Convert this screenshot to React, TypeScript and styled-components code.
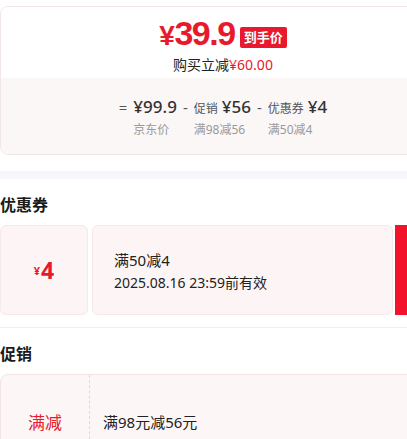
import React from "react";
import styled, { createGlobalStyle } from "styled-components";

const GlobalStyle = createGlobalStyle`
  body {
    margin: 0;
    background: #ffffff;
    overflow: hidden;
    font-family: "Noto Sans", "Noto Sans CJK SC", sans-serif;
    color: #1a1a1a;
  }
`;

const Page = styled.div`
  width: 446px;
  padding-top: 6px;
`;

const PriceCard = styled.div`
  border: 1px solid #f1e7e7;
  border-radius: 8px;
  overflow: hidden;
`;

const PriceTop = styled.div`
  height: 71px;
  display: flex;
  flex-direction: column;
  align-items: center;
  background: #ffffff;
`;

const PriceRow = styled.div`
  display: flex;
  align-items: flex-end;
  gap: 5px;
  margin-top: 11px;
  height: 36px;
`;

const BigPrice = styled.span`
  color: #e8192c;
  font-family: "Liberation Sans", Arial, sans-serif;
  font-weight: 700;
  font-size: 34px;
  line-height: 36px;
  letter-spacing: -1.5px;
`;

const Yen = styled.span<{ size: number }>`
  font-size: ${(p) => p.size}px;
  margin-right: 1px;
`;

const Badge = styled.span`
  background: #e8192c;
  color: #ffffff;
  font-weight: 700;
  font-size: 13px;
  line-height: 21px;
  padding: 0 4px;
  border-radius: 2px;
  margin-bottom: 6px;
`;

const SaveLine = styled.div`
  font-size: 14px;
  line-height: 20px;
  color: #222222;
  margin-top: 1px;
`;

const Red = styled.span`
  color: #e8192c;
`;

const PriceBottom = styled.div`
  height: 76px;
  background: #fcf7f7;
  display: flex;
  justify-content: center;
  align-items: flex-start;
  padding-top: 17px;
  box-sizing: border-box;
  gap: 6px;
`;

const Group = styled.div`
  display: flex;
  flex-direction: column;
`;

const Top = styled.div`
  display: flex;
  align-items: baseline;
  gap: 4px;
  height: 24px;
`;

const Value = styled.span`
  font-size: 17px;
  font-weight: 500;
  color: #333333;
  line-height: 24px;
`;

const Small = styled.span`
  font-size: 12px;
  color: #555555;
  line-height: 24px;
`;

const Op = styled.span`
  font-size: 15px;
  color: #555555;
  line-height: 24px;
`;

const Sub = styled.span`
  font-size: 12px;
  color: #999999;
  line-height: 18px;
  margin-top: 2px;
`;

const Band = styled.div`
  height: 8px;
  background: #f6f7fa;
  margin-top: 16px;
`;

const Heading = styled.div`
  font-size: 16px;
  font-weight: 700;
  line-height: 22px;
  padding: 15px 0 9px;
  color: #1a1a1a;
`;

const Coupon = styled.div`
  display: flex;
  height: 90px;
  gap: 4px;
`;

const Stub = styled.div`
  width: 88px;
  box-sizing: border-box;
  background: #fdf5f5;
  border: 1px solid #f5e9e9;
  border-radius: 6px;
  display: flex;
  align-items: center;
  justify-content: center;
  color: #e8192c;
  font-weight: 700;
`;

const StubAmount = styled.span`
  font-size: 23px;
  line-height: 26px;
`;

const CouponBody = styled.div`
  flex: 1;
  box-sizing: border-box;
  background: #fdf5f5;
  border: 1px solid #f5e9e9;
  border-radius: 6px;
  padding: 23px 0 0 21px;
  margin-right: -2px;
`;

const CouponTitle = styled.div`
  font-size: 15px;
  line-height: 22px;
  color: #222222;
`;

const CouponDate = styled.div`
  font-size: 14px;
  line-height: 20px;
  color: #222222;
  margin-top: 2px;
`;

const GetBar = styled.div`
  width: 51px;
  background: #f2122b;
`;

const Divider = styled.div`
  height: 1px;
  background: #efefef;
  margin-top: 12px;
`;

const PromoCard = styled.div`
  display: flex;
  height: 90px;
  border: 1px solid #f3e4e4;
  border-radius: 8px;
  background: #fdf6f7;
`;

const PromoTag = styled.div`
  width: 88px;
  border-right: 1px dashed #e8d6d6;
  display: flex;
  align-items: center;
  justify-content: center;
  color: #e8192c;
  font-size: 17px;
  padding-top: 2px;
`;

const PromoText = styled.div`
  display: flex;
  align-items: center;
  padding: 2px 0 0 13px;
  font-size: 15px;
  color: #222222;
`;

export default function App() {
  return (
    <Page>
      <GlobalStyle />
      <PriceCard>
        <PriceTop>
          <PriceRow>
            <BigPrice>
              <Yen size={28}>¥</Yen>39.9
            </BigPrice>
            <Badge>到手价</Badge>
          </PriceRow>
          <SaveLine>
            购买立减<Red>¥60.00</Red>
          </SaveLine>
        </PriceTop>
        <PriceBottom>
          <Op>=</Op>
          <Group>
            <Top>
              <Value>¥99.9</Value>
            </Top>
            <Sub>京东价</Sub>
          </Group>
          <Op>-</Op>
          <Group>
            <Top>
              <Small>促销</Small>
              <Value>¥56</Value>
            </Top>
            <Sub>满98减56</Sub>
          </Group>
          <Op>-</Op>
          <Group>
            <Top>
              <Small>优惠券</Small>
              <Value>¥4</Value>
            </Top>
            <Sub>满50减4</Sub>
          </Group>
        </PriceBottom>
      </PriceCard>
      <Band />
      <Heading>优惠券</Heading>
      <Coupon>
        <Stub>
          <Yen size={11}>¥</Yen>
          <StubAmount>4</StubAmount>
        </Stub>
        <CouponBody>
          <CouponTitle>满50减4</CouponTitle>
          <CouponDate>2025.08.16 23:59前有效</CouponDate>
        </CouponBody>
        <GetBar />
      </Coupon>
      <Divider />
      <Heading>促销</Heading>
      <PromoCard>
        <PromoTag>满减</PromoTag>
        <PromoText>满98元减56元</PromoText>
      </PromoCard>
    </Page>
  );
}
